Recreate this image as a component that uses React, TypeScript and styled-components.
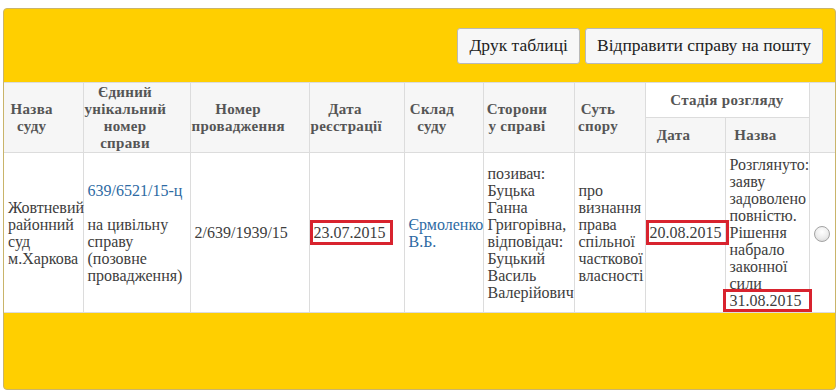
import React from "react";
import styled, { createGlobalStyle } from "styled-components";

const FONT = `"Liberation Serif", "Times New Roman", serif`;

const COLORS = {
  yellow: "#ffcf00",
  panelBorder: "#c9b46a",
  grid: "#dcdcdc",
  headBg: "#f6f6f6",
  headText: "#555555",
  text: "#3d3d3d",
  link: "#2d6aa3",
  mark: "#d8232e",
};

const GlobalStyle = createGlobalStyle`
  html, body {
    margin: 0;
    padding: 0;
    background: #ffffff;
    font-family: ${FONT};
  }
`;

const Page = styled.div`
  padding: 8px 3px 0 3px;
  font-family: ${FONT};
`;

const Panel = styled.div`
  background: ${COLORS.yellow};
  border: 1px solid ${COLORS.panelBorder};
  border-radius: 4px;
`;

const Toolbar = styled.div`
  height: 73px;
  display: flex;
  align-items: center;
  justify-content: flex-end;
  gap: 5px;
  padding: 0 12px 0 0;
`;

const ToolButton = styled.button`
  height: 36px;
  padding: 0 11px;
  font-family: ${FONT};
  font-size: 17.5px;
  color: #222;
  background: #f7f7f7;
  border: 1px solid #b9b9b9;
  border-radius: 3px;
  cursor: pointer;
`;

const Table = styled.table`
  width: 100%;
  table-layout: fixed;
  border-collapse: collapse;
  background: #fff;
  font-family: ${FONT};
`;

const HeadCell = styled.th<{ $plain?: boolean; $center?: boolean }>`
  background: ${(p) => (p.$plain ? "#fff" : COLORS.headBg)};
  color: ${COLORS.headText};
  font-family: ${FONT};
  font-size: 15px;
  font-weight: bold;
  line-height: 17px;
  letter-spacing: 0.3px;
  text-align: center;
  vertical-align: middle;
  padding: ${(p) => (p.$center ? "0 2px" : "0 24px 0 1px")};
  border: 1px solid ${COLORS.grid};
  height: 34px;
  &:first-child {
    border-left: none;
  }
  &:last-child {
    border-right: none;
  }
`;

const Cell = styled.td`
  color: ${COLORS.text};
  font-family: ${FONT};
  font-size: 16px;
  line-height: 17px;
  vertical-align: middle;
  padding: 3px 4px;
  border: 1px solid ${COLORS.grid};
  height: 152px;
  &:first-child {
    border-left: none;
  }
  &:last-child {
    border-right: none;
    text-align: center;
  }
`;

const CaseLink = styled.a`
  color: ${COLORS.link};
  text-decoration: none;
`;

const Marked = styled.span<{ $tail?: boolean }>`
  border: 3px solid ${COLORS.mark};
  padding: ${(p) => (p.$tail ? "0 7px 0 4px" : "1px 4px 1px 1px")};
  margin-left: ${(p) => (p.$tail ? "-7px" : "-4px")};
`;

const Radio = styled.input.attrs({ type: "radio" })`
  appearance: none;
  width: 16px;
  height: 16px;
  margin: 0;
  border-radius: 50%;
  border: 1px solid #a4a4a4;
  background: radial-gradient(circle at 50% 35%, #ffffff 0%, #ececec 55%, #d2d2d2 100%);
  vertical-align: middle;
`;

const Footer = styled.div`
  height: 76px;
`;

const widths = [79, 107, 119, 95, 79, 91, 71, 80, 84];

export default function App() {
  return (
    <Page>
      <GlobalStyle />
      <Panel>
        <Toolbar>
          <ToolButton>Друк таблиці</ToolButton>
          <ToolButton>Відправити справу на пошту</ToolButton>
        </Toolbar>
        <Table>
          <colgroup>
            {widths.map((w, i) => (
              <col key={i} style={{ width: w }} />
            ))}
            <col />
          </colgroup>
          <thead>
            <tr>
              <HeadCell rowSpan={2}>Назва суду</HeadCell>
              <HeadCell rowSpan={2}>Єдиний унікальний номер справи</HeadCell>
              <HeadCell rowSpan={2}>Номер провадження</HeadCell>
              <HeadCell rowSpan={2}>Дата реєстрації</HeadCell>
              <HeadCell rowSpan={2}>Склад суду</HeadCell>
              <HeadCell rowSpan={2}>Сторони у справі</HeadCell>
              <HeadCell rowSpan={2}>Суть спору</HeadCell>
              <HeadCell colSpan={2} $plain $center>
                Стадія розгляду
              </HeadCell>
              <HeadCell rowSpan={2} />
            </tr>
            <tr>
              <HeadCell>Дата</HeadCell>
              <HeadCell>Назва</HeadCell>
            </tr>
          </thead>
          <tbody>
            <tr>
              <Cell>Жовтневий районний суд м.Харкова</Cell>
              <Cell>
                <CaseLink href="#">639/6521/15-ц</CaseLink>
                <br />
                <br />
                на цивільну справу (позовне провадження)
              </Cell>
              <Cell>2/639/1939/15</Cell>
              <Cell>
                <Marked>23.07.2015</Marked>
              </Cell>
              <Cell>
                <CaseLink href="#">Єрмоленко В.Б.</CaseLink>
              </Cell>
              <Cell>
                позивач: Буцька Ганна Григорівна, відповідач: Буцький Василь Валерійович
              </Cell>
              <Cell>про визнання права спільної часткової власності</Cell>
              <Cell>
                <Marked>20.08.2015</Marked>
              </Cell>
              <Cell>
                Розглянуто: заяву задоволено повністю. Рішення набрало законної сили
                <br />
                <Marked $tail>31.08.2015</Marked>
              </Cell>
              <Cell>
                <Radio name="case" />
              </Cell>
            </tr>
          </tbody>
        </Table>
        <Footer />
      </Panel>
    </Page>
  );
}
